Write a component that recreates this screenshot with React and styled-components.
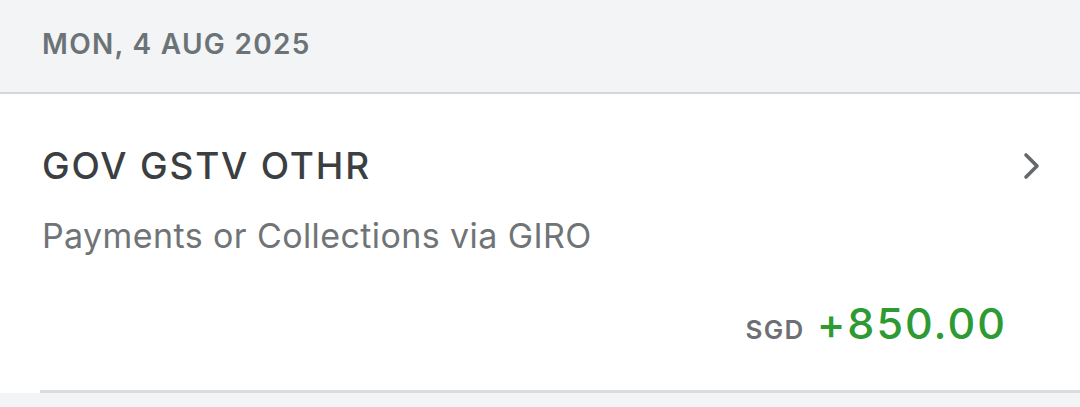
import React from "react";
import styled, { createGlobalStyle } from "styled-components";

const GlobalStyle = createGlobalStyle`
  html, body {
    margin: 0;
    padding: 0;
    background: #f3f4f6;
    font-family: Inter, "Liberation Sans", Arial, sans-serif;
  }
`;

const Page = styled.div`
  width: 1080px;
  height: 407px;
  background: #f3f4f6;
  overflow: hidden;
`;

const DateHeader = styled.div`
  height: 94px;
  box-sizing: border-box;
  padding: 27px 0 0 42px;
  font-size: 28px;
  line-height: 34px;
  font-weight: 600;
  letter-spacing: 1.3px;
  color: #6c7377;
  border-bottom: 2px solid #d7d7db;
`;

const Card = styled.div`
  background: #ffffff;
  padding-left: 40px;
`;

const CardBody = styled.div`
  height: 299px;
  box-sizing: border-box;
  padding: 52px 0 0 2px;
  border-bottom: 3px solid #dcdcde;
  display: flex;
  flex-direction: column;
`;

const TitleRow = styled.div`
  display: flex;
  align-items: center;
  justify-content: space-between;
  padding-right: 38px;
`;

const Title = styled.div`
  font-size: 37px;
  font-weight: 500;
  letter-spacing: 1.8px;
  color: #3b3f42;
  line-height: 40px;
`;

const Subtitle = styled.div`
  margin-top: 30px;
  font-size: 34px;
  letter-spacing: 0.4px;
  color: #707477;
  line-height: 40px;
`;

const AmountRow = styled.div`
  margin-top: 41px;
  display: flex;
  justify-content: flex-end;
  align-items: baseline;
  gap: 12px;
  padding-right: 73px;
`;

const Currency = styled.span`
  font-size: 26px;
  font-weight: 600;
  letter-spacing: 1.3px;
  color: #6c7074;
`;

const Amount = styled.span`
  font-size: 43px;
  font-weight: 500;
  letter-spacing: 2px;
  color: #2e9a33;
`;

const Chevron = () => (
  <svg width="20" height="30" viewBox="0 0 20 30" fill="none">
    <path
      d="M4 4 L15 15 L4 26"
      stroke="#66696c"
      strokeWidth="3.6"
      strokeLinecap="round"
      strokeLinejoin="round"
    />
  </svg>
);

export default function App() {
  return (
    <>
      <GlobalStyle />
      <Page>
        <DateHeader>MON, 4 AUG 2025</DateHeader>
        <Card>
          <CardBody>
            <TitleRow>
              <Title>GOV GSTV OTHR</Title>
              <Chevron />
            </TitleRow>
            <Subtitle>Payments or Collections via GIRO</Subtitle>
            <AmountRow>
              <Currency>SGD</Currency>
              <Amount>+850.00</Amount>
            </AmountRow>
          </CardBody>
        </Card>
      </Page>
    </>
  );
}
